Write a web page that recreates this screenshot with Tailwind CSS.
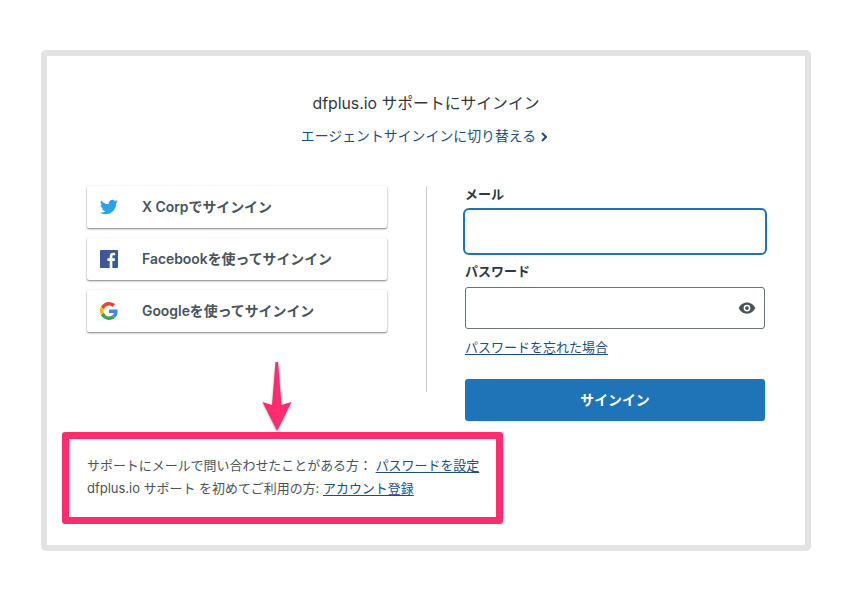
<!DOCTYPE html>
<html lang="ja">

<head>
    <meta charset="UTF-8">
    <meta name="viewport" content="width=device-width, initial-scale=1.0">
    <title>dfplus.io support sign in</title>
    <script src="https://cdn.jsdelivr.net/npm/@tailwindcss/browser@4"></script>
</head>

<body class="h-screen w-screen overflow-hidden bg-white font-['Inter','Noto_Sans_CJK_JP',sans-serif]">
    <div class="relative ml-[41px] mt-[50px] h-[501px] w-[770px] rounded-[5px] border-[6px] border-[#e3e3e3] bg-white">
        <!-- heading -->
        <div class="pt-[36px] text-center">
            <h1 class="text-[15.8px] leading-[24px] text-[#2f3941]">dfplus.io サポートにサインイン</h1>
            <a class="mt-[10px] flex items-center justify-center gap-[5px] pr-[4px] text-[13.9px] leading-[20px] text-[#1f4e79]">
                エージェントサインインに切り替える
                <svg class="mt-[2px] h-[10px] w-[6px]" viewBox="0 0 6 10" fill="none" stroke="#1f4e79" stroke-width="2"><path d="M1 1l4 4-4 4" /></svg>
            </a>
        </div>

        <div class="ml-[40px] mt-[40px] flex h-[235px] items-start">
            <!-- social buttons -->
            <div class="flex w-[300px] flex-col gap-[10px]">
                <button class="flex h-[42px] items-center rounded-[2px] bg-white pl-[13px] text-[13.9px] font-semibold text-[#49545c] shadow-[0_1px_2px_rgba(0,0,0,0.5),0_0_1px_rgba(0,0,0,0.05)]">
                    <svg class="h-[18px] w-[18px]" viewBox="0 0 24 24"><path fill="#2aa3ef" d="M23.6 4.6c-.9.4-1.8.6-2.8.8 1-.6 1.8-1.6 2.1-2.7-.9.6-2 1-3.1 1.2A4.9 4.9 0 0 0 11.5 8.300C7.500 8.100 3.900 6.200 1.500 3.200c-1.300 2.200-.7 5.100 1.500 6.500-.8 0-1.500-.2-2.200-.6 0 2.400 1.700 4.400 3.900 4.900-.7.2-1.500.2-2.200.1.600 2 2.400 3.400 4.600 3.400A9.900 9.900 0 0 1 0 19.500 13.900 13.900 0 0 0 7.500 21.700c9.100 0 14.300-7.700 14-14.600 1-.7 1.800-1.500 2.100-2.500z" /></svg>
                    <span class="ml-[24px]">X Corpでサインイン</span>
                </button>
                <button class="flex h-[42px] items-center rounded-[2px] bg-white pl-[13px] text-[13.9px] font-semibold text-[#49545c] shadow-[0_1px_2px_rgba(0,0,0,0.5),0_0_1px_rgba(0,0,0,0.05)]">
                    <svg class="h-[18px] w-[18px]" viewBox="0 0 18 18"><rect width="18" height="18" rx="1" fill="#3b5998" /><path fill="#fff" d="M12.400 18v-7h2.300l.35-2.700H12.400V6.600c0-.8.2-1.300 1.350-1.300h1.400V2.900c-.25 0-1.100-.1-2-.1-2.050 0-3.450 1.250-3.450 3.550v1.950H7.400V11h2.300v7z" /></svg>
                    <span class="ml-[24px]">Facebookを使ってサインイン</span>
                </button>
                <button class="flex h-[42px] items-center rounded-[2px] bg-white pl-[13px] text-[13.9px] font-semibold text-[#49545c] shadow-[0_1px_2px_rgba(0,0,0,0.5),0_0_1px_rgba(0,0,0,0.05)]">
                    <svg class="h-[18px] w-[18px]" viewBox="0 0 48 48">
                        <path fill="#EA4335" d="M24 9.500c3.500 0 6.700 1.300 9.100 3.500l6.800-6.800C35.800 2.400 30.200 0 24 0 14.600 0 6.500 5.400 2.600 13.200l7.900 6.200C12.400 13.600 17.700 9.500 24 9.500z" />
                        <path fill="#4285F4" d="M47 24.500c0-1.600-.1-3.100-.4-4.500H24v9h12.900c-.6 3-2.200 5.500-4.800 7.200l7.700 6C44.300 37.900 47 31.800 47 24.500z" />
                        <path fill="#FBBC05" d="M10.500 28.600A14.500 14.500 0 0 1 10.500 19.400l-7.900-6.200A24 24 0 0 0 2.600 34.800z" />
                        <path fill="#34A853" d="M24 48c6.500 0 11.900-2.100 15.800-5.800l-7.700-6c-2.100 1.400-4.900 2.300-8.100 2.300-6.300 0-11.600-4.100-13.500-9.900l-7.900 6.200C6.500 42.600 14.600 48 24 48z" />
                    </svg>
                    <span class="ml-[24px]">Googleを使ってサインイン</span>
                </button>
            </div>

            <div class="ml-[39px] h-[206px] w-px bg-[#cfcfcf]"></div>

            <!-- form -->
            <form class="ml-[38px] w-[300px]">
                <label class="block h-[22px] text-[13px] font-semibold leading-[17px] text-[#2f3941]">メール</label>
                <div class="-mx-[2px] h-[47px] rounded-[6px] border-[2px] border-[#1f73b7] bg-white"></div>
                <label class="mt-[5px] block h-[27px] text-[13px] font-semibold leading-[22px] text-[#2f3941]">パスワード</label>
                <div class="flex h-[42px] items-center justify-end rounded-[3px] border border-[#68737d] bg-white pr-[8px]">
                    <svg class="h-[18px] w-[18px]" viewBox="0 0 24 24"><path fill="#49545c" d="M12 4.500C7 4.500 2.700 7.600 1 12c1.700 4.400 6 7.500 11 7.500s9.300-3.100 11-7.500c-1.700-4.400-6-7.500-11-7.500zM12 16.500a4.500 4.500 0 1 1 0-9 4.500 4.500 0 0 1 0 9zm0-7a2.500 2.500 0 1 0 0 5 2.500 2.500 0 0 0 0-5z" /></svg>
                </div>
                <a class="mt-[10px] block w-fit text-[13px] leading-[17px] text-[#1f4e79] underline underline-offset-2">パスワードを忘れた場合</a>
                <button class="mt-[23px] h-[42px] w-full rounded-[3px] bg-[#1f73b7] text-[13.9px] font-semibold text-white">サインイン</button>
            </form>
        </div>

        <!-- highlighted footer -->
        <div class="ml-[15px] mt-[11px] h-[92px] w-[441px] rounded-[3px] border-[7px] border-[#ff2d6d] bg-white pl-[18px] pt-[14px] text-[12.96px] leading-[24px] text-[#49545c]">
            <p>サポートにメールで問い合わせたことがある方： <a class="text-[#1f4e79] underline underline-offset-2">パスワードを設定</a></p>
            <p class="-mt-px">dfplus.io サポート を初めてご利用の方: <a class="text-[#1f4e79] underline underline-offset-2">アカウント登録</a></p>
        </div>

        <!-- annotation arrow -->
        <svg class="absolute left-[215px] top-[306px] h-[70px] w-[30px] drop-shadow-[0_1px_1px_rgba(0,0,0,0.3)]" viewBox="0 0 30 70"><path fill="#ff2d6d" d="M13.500 0h2.500L19.500 43 29.500 40 15 69 .5 40 10 43z" /></svg>
    </div>
</body>

</html>
